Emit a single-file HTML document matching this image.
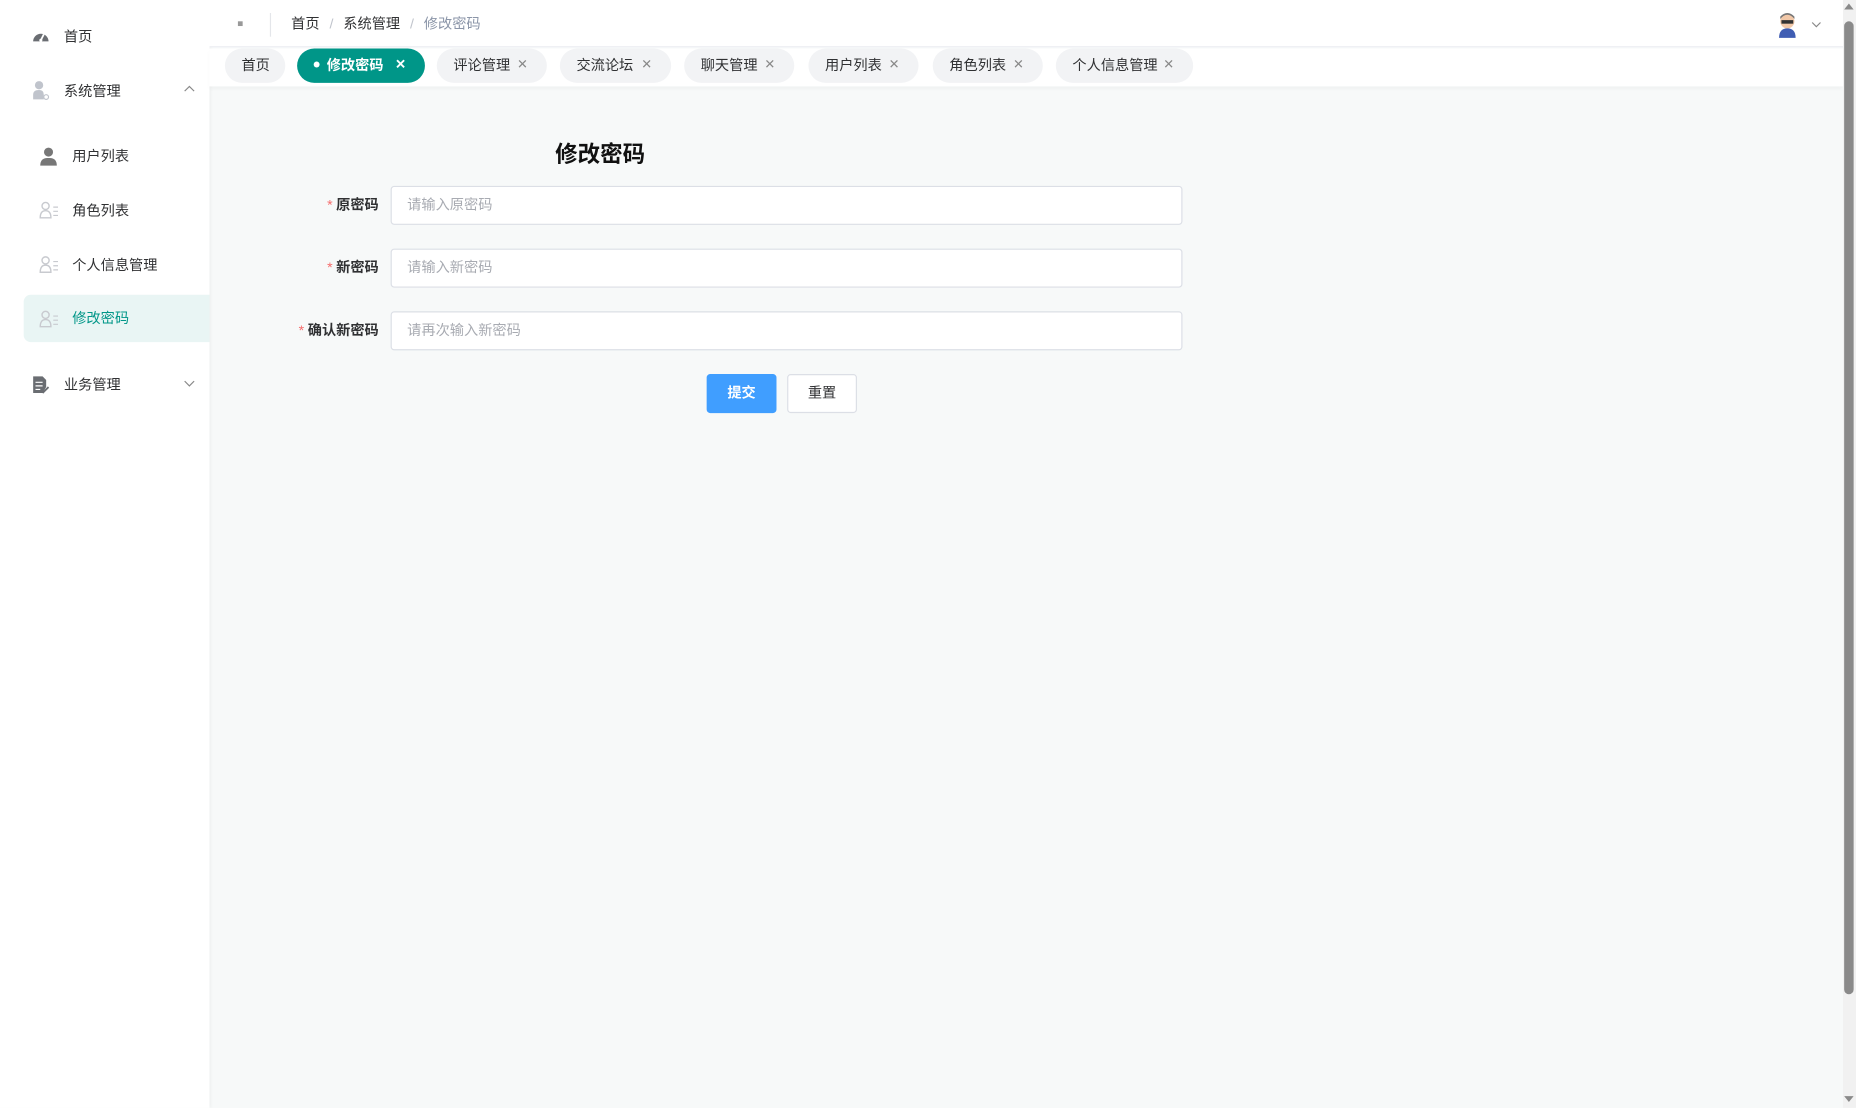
<!DOCTYPE html>
<html><head><meta charset="utf-8"><style>
html,body{margin:0;padding:0;width:1856px;height:1108px;overflow:hidden;background:#f7f9f9}
*{box-sizing:border-box}
#w{position:absolute;left:0;top:0;width:1568px;height:936px;transform:scale(1.18367);transform-origin:0 0;font-family:"Liberation Sans","Noto Sans CJK SC",sans-serif;font-size:12px;color:#303133;background:#f7f9f9}
.a{position:absolute}
#side{left:0;top:0;width:177px;height:936px;background:#fff;box-shadow:1px 0 3px rgba(0,0,0,.05)}
.mi{position:absolute;left:0;width:177px;height:20px;line-height:20px;color:#303133}
.hdr{left:177px;top:0;width:1380px;height:40px;background:#fff;border-bottom:1px solid #eceef2}
.tabs{left:177px;top:41px;width:1380px;height:32px;background:#fff;box-shadow:0 2px 3px rgba(0,0,0,.03)}
.tab{position:absolute;top:0;height:29px;line-height:29px;border-radius:15px;background:#f2f3f5;color:#303133;padding-left:14px;font-size:12px}
.tab .x{position:absolute;right:16px;top:0;color:#888;font-size:11px}
.lbl{position:absolute;width:150px;left:170px;text-align:right;font-weight:bold;color:#303133;line-height:33px}
.lbl b{color:#f56c6c;font-weight:normal;margin-right:3px}
.inp{position:absolute;left:330px;width:669px;height:33px;background:#fff;border:1px solid #dcdfe6;border-radius:3px;padding-left:13px;line-height:31px;color:#a8abb2}
.btn{position:absolute;top:316px;width:59px;height:33px;border-radius:3px;text-align:center;line-height:33px}
</style></head><body><div id="w">
<div class="a" id="side">
  <svg class="a" style="left:27px;top:24px" width="15" height="14" viewBox="0 0 15 14"><path d="M1 11 A6.5 6.5 0 1 1 14 11 Z" fill="#6a6d72"/><path d="M7.5 10 L10 5" stroke="#fff" stroke-width="1.5"/><circle cx="7.5" cy="10" r="1.3" fill="#fff"/></svg>
  <div class="mi" style="top:21px;left:54px">首页</div>
  <svg class="a" style="left:27px;top:68px" width="15" height="17" viewBox="0 0 15 17"><circle cx="6" cy="4" r="3.5" fill="#c0c4cc"/><path d="M1 16 V12 Q1 8 6 8 Q10 8 10 12 V16Z" fill="#c0c4cc"/><circle cx="12" cy="14" r="2" fill="none" stroke="#c0c4cc"/></svg>
  <div class="mi" style="top:67px;left:54px">系统管理</div>
  <svg class="a" style="left:155px;top:72px" width="10" height="6"><path d="M1 5 L5 1 L9 5" stroke="#888" fill="none"/></svg>
  <svg class="a" style="left:33px;top:124px" width="16" height="16" viewBox="0 0 16 16"><circle cx="8" cy="4.5" r="3.8" fill="#777"/><path d="M1 16 Q1 9 8 9.5 Q15 9 15 16Z" fill="#777"/></svg>
  <div class="mi" style="top:122px;left:61px">用户列表</div>
  <svg class="a" style="left:33px;top:170px" width="17" height="15" viewBox="0 0 17 15"><circle cx="5.5" cy="4" r="3" fill="none" stroke="#c8cacf" stroke-width="1.2"/><path d="M1 14 Q1 8 5.5 8 Q10 8 10 14Z" fill="none" stroke="#c8cacf" stroke-width="1.2"/><path d="M12 5h4M12 8.5h4M12 12h4" stroke="#c8cacf"/></svg>
  <div class="mi" style="top:168px;left:61px">角色列表</div>
  <svg class="a" style="left:33px;top:216px" width="17" height="15" viewBox="0 0 17 15"><circle cx="5.5" cy="4" r="3" fill="none" stroke="#c8cacf" stroke-width="1.2"/><path d="M1 14 Q1 8 5.5 8 Q10 8 10 14Z" fill="none" stroke="#c8cacf" stroke-width="1.2"/><path d="M12 5h4M12 8.5h4M12 12h4" stroke="#c8cacf"/></svg>
  <div class="mi" style="top:214px;left:61px">个人信息管理</div>
  <div class="a" style="left:20px;top:249px;width:157px;height:40px;background:#e9f5f4;border-radius:6px 0 0 6px"></div>
  <svg class="a" style="left:33px;top:262px" width="17" height="15" viewBox="0 0 17 15"><circle cx="5.5" cy="4" r="3" fill="none" stroke="#c8cacf" stroke-width="1.2"/><path d="M1 14 Q1 8 5.5 8 Q10 8 10 14Z" fill="none" stroke="#c8cacf" stroke-width="1.2"/><path d="M12 5h4M12 8.5h4M12 12h4" stroke="#c8cacf"/></svg>
  <div class="mi" style="top:259px;left:61px;color:#009688">修改密码</div>
  <svg class="a" style="left:27px;top:317px" width="15" height="16" viewBox="0 0 15 16"><path d="M1 1h8l3 3v6l-3 5H1Z" fill="#6a6d72"/><path d="M3 6h6M3 9h6M3 12h4" stroke="#fff"/><path d="M9 15l5-5" stroke="#6a6d72" stroke-width="1.5"/></svg>
  <div class="mi" style="top:315px;left:54px">业务管理</div>
  <svg class="a" style="left:155px;top:321px" width="10" height="6"><path d="M1 1 L5 5 L9 1" stroke="#888" fill="none"/></svg>
</div>
<div class="a hdr">
  <div class="a" style="left:24px;top:18px;width:4px;height:4px;background:#999"></div>
  <div class="a" style="left:51px;top:11px;width:1px;height:20px;background:#e4e6ea"></div>
  <div class="a" style="left:69px;top:12px;line-height:16px;color:#303133">首页 <span style="color:#c0c4cc;margin:0 5px">/</span> 系统管理 <span style="color:#c0c4cc;margin:0 5px">/</span> <span style="color:#8b95a8">修改密码</span></div>
  <svg class="a" style="left:1323px;top:9px" width="20" height="24" viewBox="0 0 20 24"><circle cx="10" cy="9" r="6" fill="#f2c8a8"/><path d="M4 7 Q10 0 16 7 L16 5 Q10 -1 4 5Z" fill="#777"/><rect x="5" y="8" width="10" height="3" fill="#333"/><path d="M3 23 Q3 15 10 15 Q17 15 17 23Z" fill="#3f5db3"/></svg>
  <svg class="a" style="left:1353px;top:18px" width="9" height="6"><path d="M1 1 L4.5 4.5 L8 1" stroke="#888" fill="none"/></svg>
</div>
<div class="a tabs">
  <div class="tab" style="left:13px;width:51px">首页</div>
  <div class="tab" style="left:74px;width:108px;background:#009688;color:#fff;font-weight:bold"><span style="display:inline-block;width:5px;height:5px;border-radius:50%;background:#fff;vertical-align:middle;margin-right:6px;position:relative;top:-1px"></span>修改密码<span class="x" style="color:#fff">✕</span></div>
  <div class="tab" style="left:192px;width:93px">评论管理<span class="x">✕</span></div>
  <div class="tab" style="left:296px;width:94px">交流论坛<span class="x">✕</span></div>
  <div class="tab" style="left:401px;width:93px">聊天管理<span class="x">✕</span></div>
  <div class="tab" style="left:506px;width:93px">用户列表<span class="x">✕</span></div>
  <div class="tab" style="left:611px;width:93px">角色列表<span class="x">✕</span></div>
  <div class="tab" style="left:715px;width:116px">个人信息管理<span class="x">✕</span></div>
</div>
<div class="a" style="left:469px;top:116px;font-size:19px;font-weight:bold;color:#111">修改密码</div>
<div class="lbl" style="top:157px"><b>*</b>原密码</div><div class="inp" style="top:157px">请输入原密码</div>
<div class="lbl" style="top:210px"><b>*</b>新密码</div><div class="inp" style="top:210px">请输入新密码</div>
<div class="lbl" style="top:263px"><b>*</b>确认新密码</div><div class="inp" style="top:263px">请再次输入新密码</div>
<div class="btn" style="left:597px;background:#409eff;color:#fff;font-weight:bold">提交</div>
<div class="btn" style="left:665px;background:#fff;border:1px solid #dcdfe6;color:#303133;line-height:31px">重置</div>
<div class="a" style="left:1557px;top:0;width:11px;height:936px;background:#f1f1f1"></div>
<div class="a" style="left:1558px;top:18px;width:8px;height:822px;background:#8a8a8a;border-radius:4px"></div>
<div class="a" style="left:1558px;top:3px;width:0;height:0;border-left:4px solid transparent;border-right:4px solid transparent;border-bottom:5px solid #8a8a8a"></div>
<div class="a" style="left:1558px;top:926px;width:0;height:0;border-left:4px solid transparent;border-right:4px solid transparent;border-top:5px solid #8a8a8a"></div>
</div></body></html>
